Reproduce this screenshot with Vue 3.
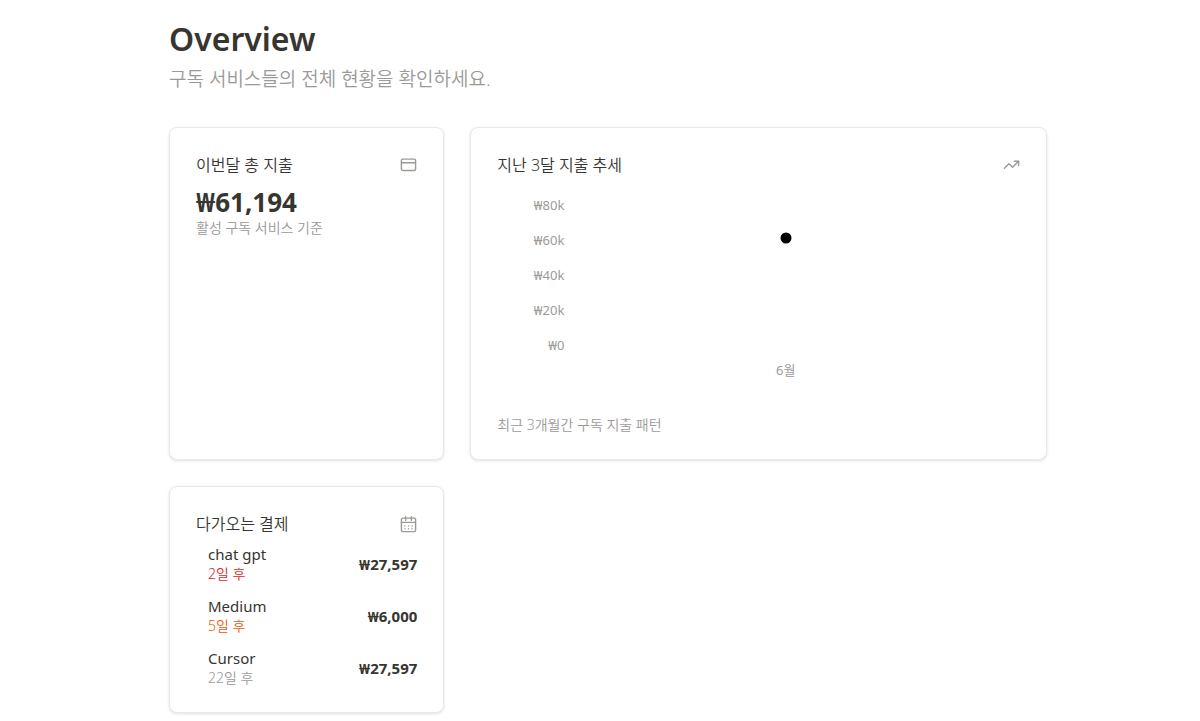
<script setup>
const upcoming = [
  { name: 'chat gpt', due: '2일 후', level: 'urgent', price: '₩27,597' },
  { name: 'Medium', due: '5일 후', level: 'soon', price: '₩6,000' },
  { name: 'Cursor', due: '22일 후', level: 'later', price: '₩27,597' },
]

const maxSpend = 80000
const ticks = ['₩80k', '₩60k', '₩40k', '₩20k', '₩0']
const points = [{ label: '6월', value: 61194 }]
const dotStyle = (value) => ({ bottom: `${(value / maxSpend) * 100}%` })
</script>

<template>
  <main class="page">
    <header class="page-header">
      <h1>Overview</h1>
      <p>구독 서비스들의 전체 현황을 확인하세요.</p>
    </header>

    <div class="grid">
      <section class="card">
        <div class="card-head">
          <h2>이번달 총 지출</h2>
          <svg class="icon" viewBox="0 0 24 24" aria-hidden="true">
            <rect x="2" y="3" width="20" height="16" rx="2" />
            <path d="M2 8h20" />
          </svg>
        </div>
        <p class="total">₩61,194</p>
        <p class="note">활성 구독 서비스 기준</p>
      </section>

      <section class="card wide">
        <div class="card-head">
          <h2>지난 3달 지출 추세</h2>
          <svg class="icon" viewBox="0 0 24 24" aria-hidden="true">
            <path d="M22 6l-8.5 8.5-5-5L2 16" />
            <path d="M16 6h6v6" />
          </svg>
        </div>
        <div class="chart">
          <ul class="y-axis">
            <li v-for="t in ticks" :key="t">{{ t }}</li>
          </ul>
          <div class="plot">
            <div v-for="p in points" :key="p.label" class="slot">
              <span class="dot" :style="dotStyle(p.value)"></span>
            </div>
          </div>
          <div class="x-axis">
            <span v-for="p in points" :key="p.label">{{ p.label }}</span>
          </div>
        </div>
        <p class="note">최근 3개월간 구독 지출 패턴</p>
      </section>

      <section class="card">
        <div class="card-head">
          <h2>다가오는 결제</h2>
          <svg class="icon" viewBox="0 0 24 24" aria-hidden="true">
            <path d="M8 1v5M16 1v5" />
            <rect x="2" y="3" width="20" height="19" rx="2" />
            <path d="M2 9h20" />
            <path d="M7 14h.01M12 14h.01M17 14h.01M7 18h.01M12 18h.01M17 18h.01" />
          </svg>
        </div>
        <ul class="payments">
          <li v-for="u in upcoming" :key="u.name">
            <div>
              <p class="name">{{ u.name }}</p>
              <p class="due" :class="u.level">{{ u.due }}</p>
            </div>
            <strong>{{ u.price }}</strong>
          </li>
        </ul>
      </section>
    </div>
  </main>
</template>

<style>
body {
  background: #fff;
}
</style>

<style scoped>
.page {
  box-sizing: border-box;
  padding: 16px 153px 8px 169px;
  font-family: 'Noto Sans', 'Noto Sans CJK KR', sans-serif;
  color: #37352f;
}
h1,
h2,
p,
ul {
  margin: 0;
  padding: 0;
  list-style: none;
}
.page-header {
  margin-bottom: 30px;
}
h1 {
  font-size: 32px;
  line-height: 45px;
  font-weight: 600;
}
.page-header p {
  font-size: 19px;
  line-height: 36px;
  font-weight: 350;
  color: #9b9a97;
}
.grid {
  display: grid;
  grid-template-columns: repeat(3, minmax(0, 1fr));
  gap: 26px;
}
.card {
  box-sizing: border-box;
  padding: 26px 26px 25px;
  border: 1px solid #e9e9e7;
  border-radius: 8px;
  background: #fff;
  box-shadow: 0 1px 3px rgba(0, 0, 0, 0.12);
}
.wide {
  grid-column: span 2;
}
.card-head {
  display: flex;
  align-items: center;
  justify-content: space-between;
  height: 22px;
  margin-bottom: 9px;
}
h2 {
  font-size: 16px;
  line-height: 22px;
  font-weight: 350;
}
.icon {
  width: 17px;
  height: 17px;
  fill: none;
  stroke: #9b9a97;
  stroke-width: 2;
  stroke-linecap: round;
  stroke-linejoin: round;
}
.total {
  font-size: 26px;
  line-height: 34px;
  font-weight: 700;
}
.note {
  font-size: 14px;
  line-height: 18px;
  font-weight: 350;
  color: #9b9a97;
}
.chart {
  display: grid;
  grid-template-columns: 67px 1fr;
  column-gap: 8px;
  padding: 3px 21px 38px 0;
  color: #9b9a97;
  font-size: 13px;
}
.y-axis {
  text-align: right;
}
.y-axis li {
  height: 35px;
  line-height: 35px;
}
.plot {
  display: flex;
  height: 140px;
  margin-top: 17px;
}
.slot {
  position: relative;
  flex: 1;
}
.dot {
  position: absolute;
  left: 50%;
  width: 11px;
  height: 11px;
  border-radius: 50%;
  background: #000;
  transform: translate(-50%, 50%);
}
.x-axis {
  grid-column: 2;
  display: flex;
  justify-content: space-around;
  line-height: 15px;
}
.payments {
  display: grid;
  gap: 14px;
  padding: 1px 0 0 12px;
}
.payments li {
  display: flex;
  align-items: center;
  justify-content: space-between;
}
.name {
  font-size: 15px;
  line-height: 19px;
}
.due {
  font-size: 14px;
  line-height: 19px;
  font-weight: 350;
}
.urgent {
  color: #dc2626;
}
.soon {
  color: #ea580c;
}
.later {
  color: #9b9a97;
}
strong {
  font-size: 15px;
  line-height: 20px;
  font-weight: 700;
}
</style>
